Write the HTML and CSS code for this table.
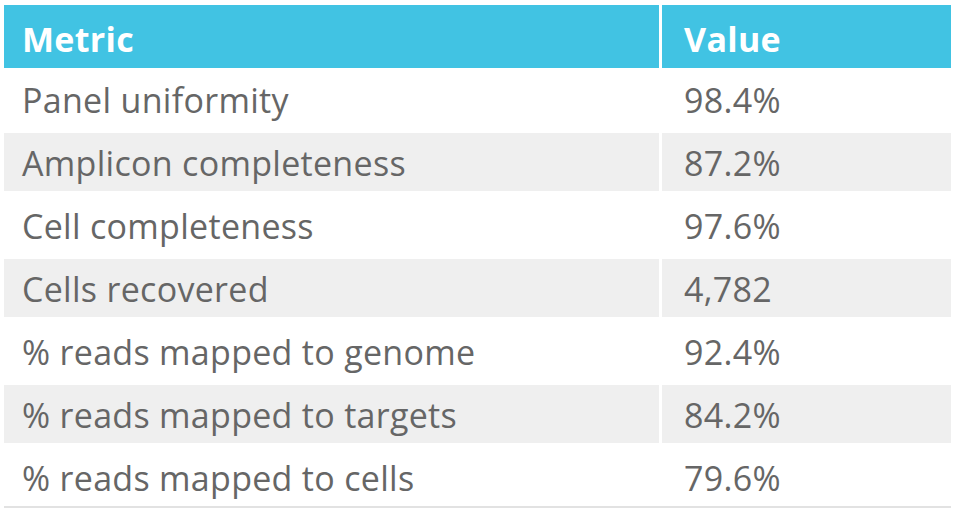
FILE: index.html
```html
<!DOCTYPE html>
<html>
<head>
<meta charset="utf-8">
<link rel="stylesheet" href="styles.css">
</head>
<body>
<div class="table">
  <div class="row head">
    <div class="cell">Metric</div>
    <div class="cell">Value</div>
  </div>
  <div class="body">
    <div class="row"><div class="cell">Panel uniformity</div><div class="cell">98.4%</div></div>
    <div class="row alt"><div class="cell">Amplicon completeness</div><div class="cell">87.2%</div></div>
    <div class="row"><div class="cell">Cell completeness</div><div class="cell">97.6%</div></div>
    <div class="row alt"><div class="cell">Cells recovered</div><div class="cell">4,782</div></div>
    <div class="row"><div class="cell">% reads mapped to genome</div><div class="cell">92.4%</div></div>
    <div class="row alt"><div class="cell">% reads mapped to targets</div><div class="cell">84.2%</div></div>
    <div class="row"><div class="cell">% reads mapped to cells</div><div class="cell">79.6%</div></div>
  </div>
</div>
</body>
</html>
```
FILE: styles.css
```css
html, body {
  margin: 0;
  padding: 0;
  background: #ffffff;
}
body {
  font-family: "Open Sans", Lato, sans-serif;
  color: #666666;
}
.table {
  padding: 5px 5px 0 4px;
}
.row {
  display: grid;
  grid-template-columns: 655px 1fr;
  column-gap: 3px;
  height: 58px;
}
.cell {
  display: flex;
  align-items: center;
  padding-left: 18px;
  padding-top: 2px;
  font-size: 34px;
  line-height: 1;
  letter-spacing: 0.3px;
}
.row .cell + .cell {
  padding-left: 22px;
}
.head {
  height: 63px;
  margin-bottom: 2px;
}
.head .cell {
  background: #41c3e3;
  color: #ffffff;
  font-weight: 700;
  padding-top: 5px;
}
.body {
  display: flex;
  flex-direction: column;
  row-gap: 5px;
  border-bottom: 2px solid #e2e2e2;
}
.alt .cell {
  background: #efefef;
}
```
